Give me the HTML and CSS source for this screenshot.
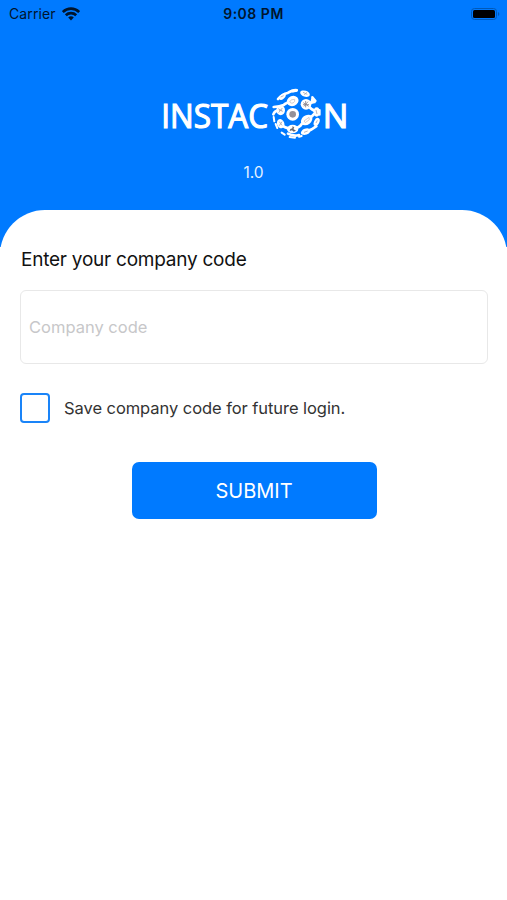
FILE: index.html
```html
<!DOCTYPE html>
<html lang="en">
<head>
    <meta charset="UTF-8">
    <meta name="viewport" content="width=device-width, initial-scale=1.0">
    <title>Instacon</title>
    <link rel="stylesheet" href="styles.css">
</head>
<body>
    <header class="header">
        <div class="statusbar">
            <div class="carrier">
                <span>Carrier</span>
                <svg class="wifi" viewBox="0 0 18 14" fill="none" stroke="#00152d" stroke-width="2.7">
                    <path d="M.8 5.1C5.4.5 12.6.5 17.2 5.1"/>
                    <path d="M3.8 8.3c2.9-2.8 7.5-2.8 10.4 0"/>
                    <path d="M6.2 10.4c1.5-1.4 4.1-1.4 5.6 0L9 13.5z" fill="#00152d" stroke="none"/>
                </svg>
            </div>
            <span class="time">9:08 PM</span>
            <svg class="battery" viewBox="0 0 30 14">
                <rect x="1.5" y="1.5" width="25" height="11" rx="3" fill="none" stroke="#0059b8"/>
                <rect x="3" y="3" width="22" height="8" rx="1.5" fill="#000"/>
                <path d="M28 5c1.8.6 1.8 3.4 0 4z" fill="#0059b8"/>
            </svg>
        </div>
        <svg class="logo" viewBox="0 0 630 210">
            <g class="logo-text">
                <text x="34" y="145" textLength="320" lengthAdjust="spacingAndGlyphs">INSTAC</text>
                <text x="518" y="145" textLength="77" lengthAdjust="spacingAndGlyphs">N</text>
            </g>
            <!-- globe -->
            <g stroke="#fff" stroke-linecap="round" fill="none">
                <path stroke-width="8" d="M384 57Q397 42 413 39Q423 31 440 31M371 81Q390 80 401 75Q408 68 428 63M370 103Q374 91 388 91M468 72Q485 69 491 61M476 79Q486 91 499 94M470 120Q486 111 500 94M428 147Q449 143 455 132L470 120M392 131Q401 144 428 147M467 155Q485 151 499 139M414 161Q431 170 447 165"/>
                <path stroke-width="6" d="M371 111l2 13M377 132l5 12M395 158l9 6M419 171l16 2M447 170l8-2M487 51l10 12M509 90v14"/>
            </g>
            <g fill="#fff">
                <ellipse cx="397" cy="50" rx="12" ry="7" transform="rotate(-42 397 50)"/>
                <ellipse cx="432" cy="32" rx="12" ry="5" transform="rotate(-10 432 32)"/>
                <ellipse cx="465" cy="41" rx="15" ry="9" transform="rotate(18 465 41)"/>
                <ellipse cx="428" cy="63" rx="18" ry="15" transform="rotate(-20 428 63)"/>
                <circle cx="468" cy="73" r="16"/>
                <path d="M485 49l13 20-18 4z"/>
                <ellipse cx="392" cy="91" rx="13" ry="15"/>
                <circle cx="428" cy="103" r="19"/>
                <ellipse cx="500" cy="96" rx="9" ry="14"/>
                <ellipse cx="470" cy="120" rx="19" ry="14" transform="rotate(-38 470 120)"/>
                <ellipse cx="392" cy="131" rx="11" ry="14" transform="rotate(-20 392 131)"/>
                <ellipse cx="428" cy="147" rx="17" ry="13"/>
                <ellipse cx="500" cy="126" rx="8" ry="13" transform="rotate(24 500 126)"/>
                <ellipse cx="467" cy="155" rx="15" ry="9" transform="rotate(-20 467 155)"/>
            </g>
            <!-- pictograms on the globe -->
            <g fill="none" stroke="#aaa7b0" stroke-width="2.5">
                <path d="M419 66q2-9 15-8 2 8-5 11-6 2-10-3z" stroke="#c9c4c6"/>
                <path d="M460 68l16 11M474 65l-12 14M467 63v19M459 74h18" stroke="#85818a"/>
                <path d="M385 86l13 9M397 84l-11 14M387 91h10"/>
                <path d="M462 123l15-11 1 7-12 9z" stroke="#d0c3c2"/>
                <path d="M388 125l8 11M396 125l-8 12"/>
                <path d="M459 37l13 6M463 45l7-8M392 51l9-4M462 157l11-4M498 90l3 12M502 121l-4 8"/>
            </g>
            <circle cx="428" cy="103" r="10" fill="#949199"/>
            <path d="M428 138l5 5-3 4 8 5-7 3-5-4-7 2 2-6 6-2z" fill="#68666e"/>
        </svg>
        <div class="version">1.0</div>
    </header>
    <main class="card">
        <form>
            <label class="title" for="code">Enter your company code</label>
            <input class="code" type="text" id="code" placeholder="Company code">
            <label class="save">
                <input type="checkbox" class="checkbox">
                <span>Save company code for future login.</span>
            </label>
            <button class="submit" type="button">SUBMIT</button>
        </form>
    </main>
</body>
</html>
```

FILE: styles.css
```css
* { box-sizing: border-box; }
body { margin: 0; background: white; color: #111; font-family: Inter, sans-serif; }

.header { height: 247px; background: #007aff; display: flex; flex-direction: column; align-items: center; }
.statusbar { width: 100%; height: 27px; padding: 0 7px 0 9px; display: grid; grid-template-columns: 1fr auto 1fr; align-items: center; color: #00152d; font-size: 14px; }
.carrier { display: flex; align-items: center; gap: 6px; letter-spacing: 0.1px; }
.wifi { width: 18px; height: 14px; }
.time { margin-left: -2px; font-weight: 600; letter-spacing: 0.5px; }
.battery { width: 30px; height: 14px; justify-self: end; }
.logo { width: 210px; height: 70px; margin: 53px 0 0 3px; }
.logo-text { font-family: "Open Sans", sans-serif; font-size: 99px; fill: white; stroke: white; stroke-width: 3.5px; }
.version { margin-top: 13px; color: #e5f2ff; font-size: 15.5px; line-height: 20px; }

.card { height: 690px; margin-top: -37px; padding: 38px 19px 0 20px; border-radius: 45px 45px 0 0; background: white; }
.title { display: block; padding-left: 1px; font-size: 19px; line-height: 24px; letter-spacing: -0.24px; }
.code { display: block; width: 100%; height: 74px; margin: 18px 0 29px; padding: 0 8px; border: 1px solid #e8e8e8; border-radius: 6px; font-family: inherit; font-size: 16.5px; background: white; }
.code::placeholder { color: #c7c7c9; opacity: 1; }
.save { display: flex; align-items: center; gap: 14px; height: 30px; color: #333; font-size: 16.5px; letter-spacing: -0.06px; }
.checkbox { appearance: none; width: 30px; height: 30px; margin: 0; border: 2px solid #1a84f8; border-radius: 4px; }
.submit { display: block; width: 245px; height: 57px; margin: 39px auto 0; border: none; border-radius: 7px; background: #007aff; color: white; font-family: inherit; font-size: 20px; cursor: pointer; }
```
